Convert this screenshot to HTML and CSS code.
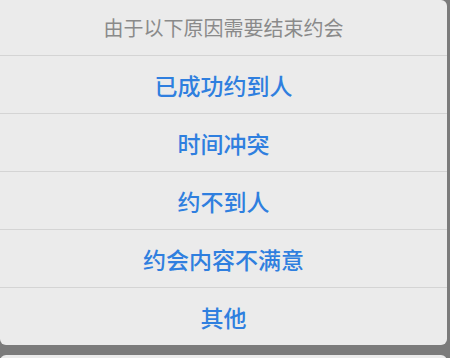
FILE: index.html
```html
<!DOCTYPE html>
<html lang="zh-CN">
<head>
    <meta charset="UTF-8">
    <meta name="viewport" content="width=device-width, initial-scale=1.0">
    <title>结束约会</title>
    <link rel="stylesheet" href="styles.css">
</head>
<body>
    <div class="action-sheet">
        <div class="sheet-group">
            <div class="sheet-title">由于以下原因需要结束约会</div>
            <div class="sheet-item">已成功约到人</div>
            <div class="sheet-item">时间冲突</div>
            <div class="sheet-item">约不到人</div>
            <div class="sheet-item">约会内容不满意</div>
            <div class="sheet-item">其他</div>
        </div>
        <!-- 取消按钮，只露出顶边 -->
        <div class="sheet-cancel"></div>
    </div>
</body>
</html>
```

FILE: styles.css
```css
/* 底部操作菜单 */
* { box-sizing: border-box; }

body {
    margin: 0;
    background: #7b7b7b;
    font-family: "Noto Sans CJK SC", "Noto Sans", sans-serif;
    overflow: hidden;
}

.action-sheet {
    width: 447px;
    display: flex;
    flex-direction: column;
    gap: 10px;
}

.sheet-group {
    background: #ebebeb;
    border-radius: 0 6px 6px 6px;
    display: flex;
    flex-direction: column;
}

.sheet-title {
    height: 55px;
    display: flex;
    justify-content: center;
    align-items: center;
    font-size: 20px;
    color: #8a8a8a;
}

.sheet-item {
    height: 58px;
    border-top: 1px solid #d4d4d4;
    display: flex;
    justify-content: center;
    align-items: center;
    font-size: 23px;
    font-weight: 500;
    color: #2f7fdf;
}

.sheet-cancel {
    height: 58px;
    background: #ebebeb;
    border-radius: 6px;
}
```
